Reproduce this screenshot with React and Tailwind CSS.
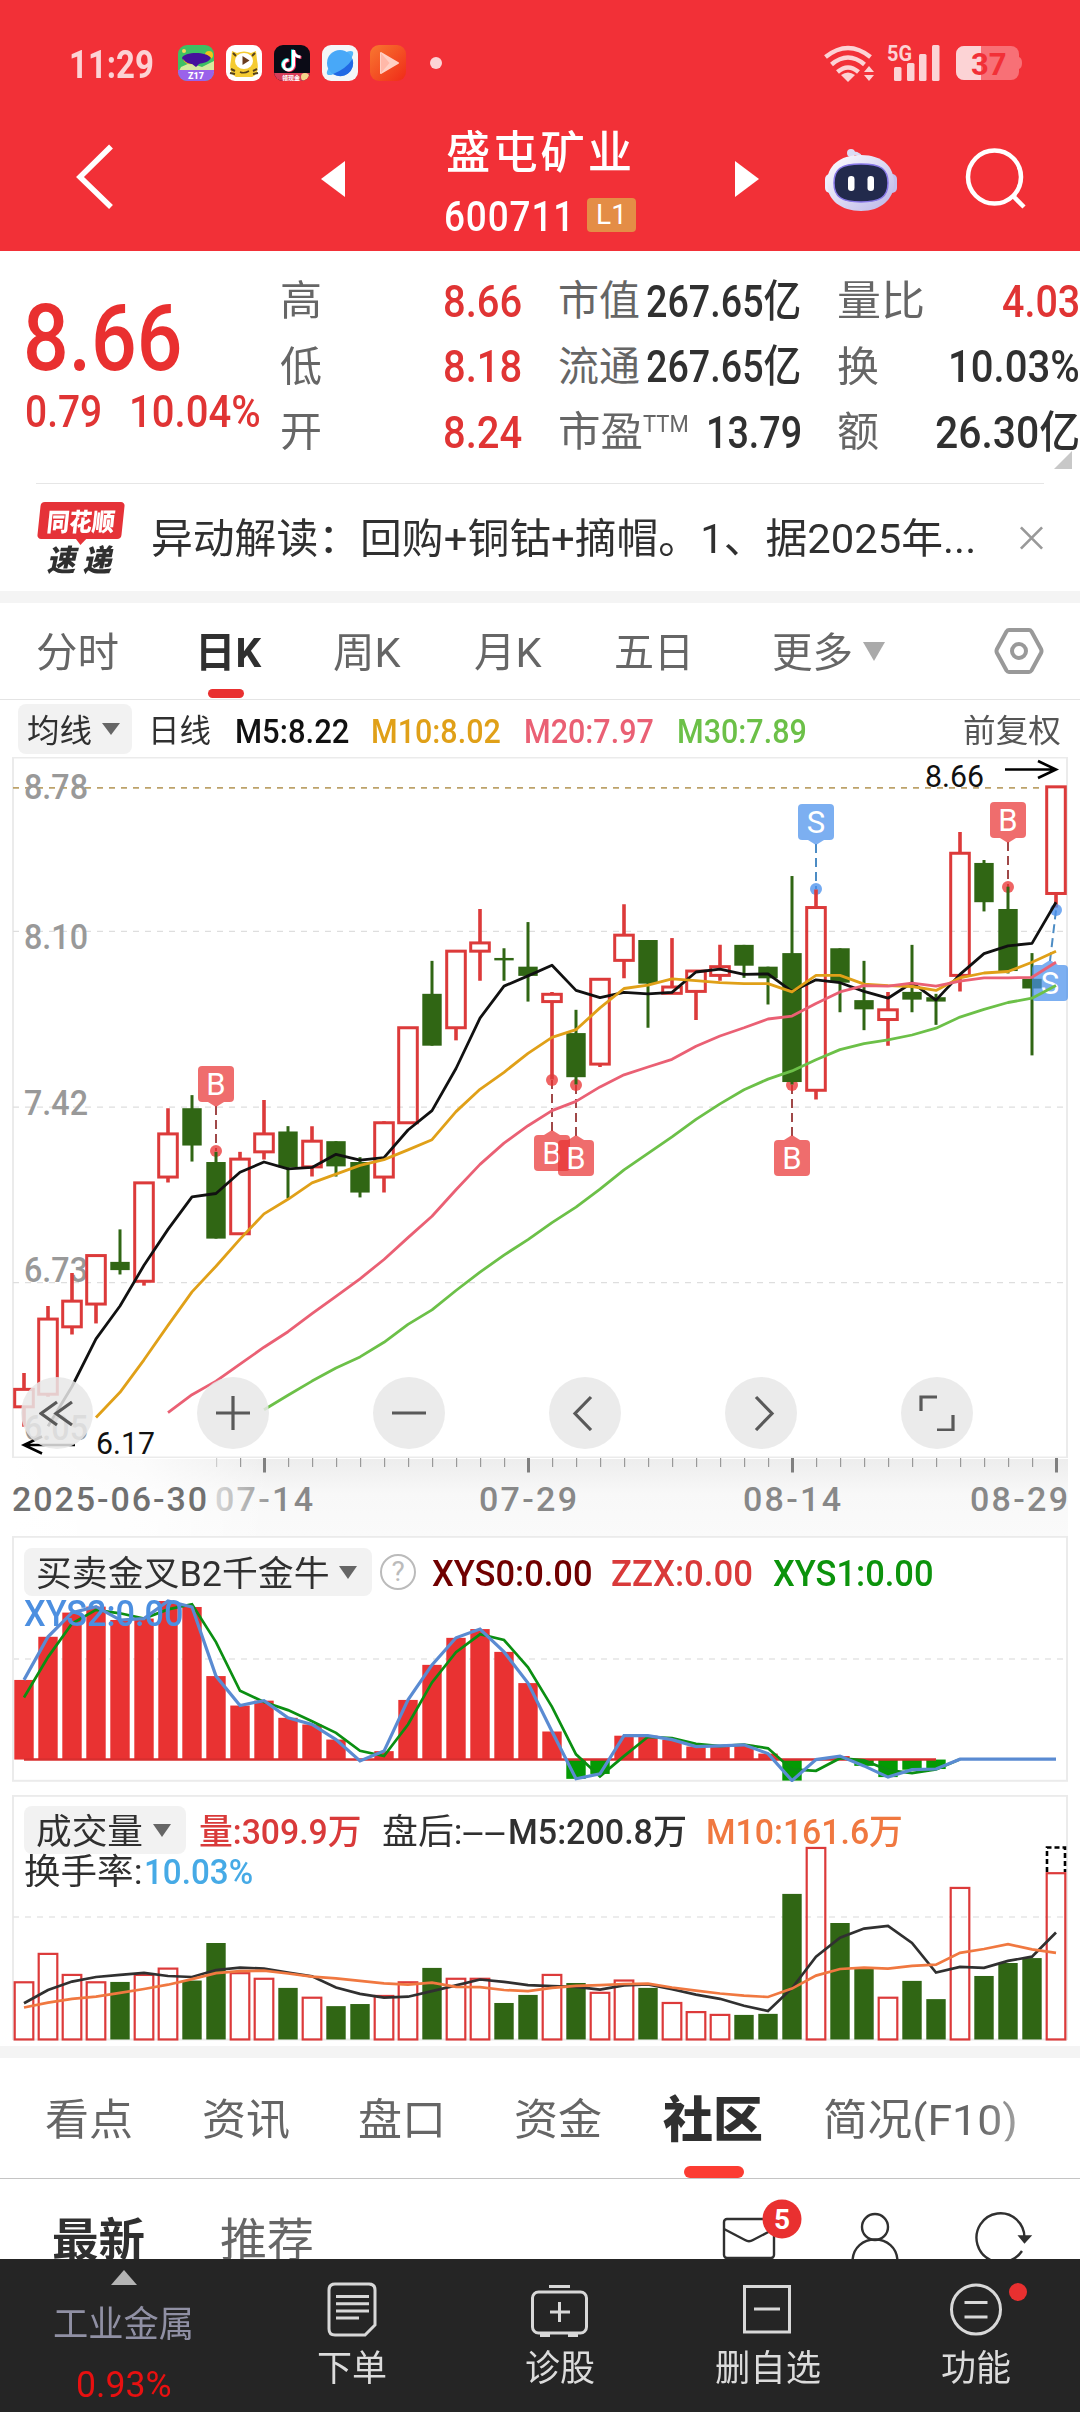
import React, { useLayoutEffect, useRef } from "react";

/* Single line of text, condensed or widened to fill the width of its box. */
function Fit({ className = "", children }) {
  const box = useRef(null);
  const txt = useRef(null);
  useLayoutEffect(() => {
    const s = box.current.clientWidth / txt.current.offsetWidth;
    txt.current.style.transform = `scaleX(${s})`;
  });
  return (
    <div ref={box} className={"shrink-0 translate-y-[1.5px] whitespace-nowrap leading-none " + className}>
      <span ref={txt} className="inline-block origin-left">{children}</span>
    </div>
  );
}

const X = (i) => 24 + i * 24;
const K = (v) => 750 + v / 2.063;
const S = (v) => 1500 + v / 2.851;
const path = (arr, start, f) =>
  arr.map((v, i) => `${i ? "L" : "M"}${X(i + start)} ${f(v).toFixed(1)}`).join("");

const RED = "#dc3a3a";
const GREEN = "#306614";

/* [rising, body top, body bottom, high, low] */
const candles = [
  [1, 1319, 1355, 1285, 1396], [1, 1174, 1329, 1147, 1334], [1, 1137, 1190, 1079, 1206],
  [1, 1043, 1143, 1043, 1183], [0, 1056, 1073, 989, 1082], [1, 893, 1096, 893, 1105],
  [1, 792, 881, 739, 892], [0, 739, 816, 712, 849], [0, 850, 1008, 829, 1008],
  [1, 844, 998, 829, 998], [1, 792, 829, 722, 845], [0, 787, 861, 776, 925],
  [1, 807, 860, 776, 880], [0, 807, 859, 807, 880], [0, 850, 913, 840, 923],
  [1, 769, 881, 766, 913], [1, 573, 769, 573, 769], [0, 503, 610, 435, 610],
  [1, 415, 573, 415, 599], [1, 398, 415, 328, 476], [0, 429, 434, 409, 476],
  [0, 447, 466, 355, 519], [1, 504, 519, 499, 680], [0, 584, 675, 536, 690],
  [1, 473, 648, 473, 654], [1, 382, 434, 318, 471], [0, 392, 482, 392, 573],
  [1, 489, 502, 388, 502], [1, 456, 498, 456, 557], [1, 447, 465, 402, 476],
  [0, 402, 445, 402, 470], [0, 447, 471, 447, 525], [0, 419, 685, 260, 690],
  [1, 325, 702, 288, 721], [0, 409, 480, 409, 541], [0, 516, 535, 435, 578],
  [1, 536, 556, 499, 610], [0, 499, 515, 402, 541], [0, 510, 519, 503, 567],
  [1, 213, 465, 169, 498], [0, 233, 314, 227, 333], [0, 328, 456, 282, 461],
  [0, 472, 492, 419, 630], [1, 76, 296, 76, 325],
];
const ma5 = [1395, 1313, 1215, 1147, 1063, 989, 922, 915, 871, 850, 864, 861, 834, 846, 841, 784, 744, 657, 553, 487, 466, 444, 496, 511, 500, 503, 500, 458, 452, 463, 462, 498, 474, 480, 498, 512, 480, 516, 463, 420, 404, 399, 314];
const ma10 = [1377, 1325, 1258, 1187, 1118, 1065, 1009, 957, 927, 893, 875, 857, 845, 825, 804, 746, 700, 665, 626, 593, 577, 532, 492, 485, 472, 476, 480, 482, 482, 499, 465, 465, 483, 486, 488, 496, 470, 460, 457, 438, 415];
const ma20 = [1367, 1330, 1302, 1267, 1232, 1200, 1163, 1127, 1091, 1051, 1006, 962, 907, 855, 811, 775, 744, 725, 695, 670, 654, 638, 611, 590, 573, 555, 549, 523, 499, 486, 487, 481, 487, 477, 470, 470, 469, 438];
const ma30 = [1361, 1331, 1302, 1275, 1252, 1222, 1185, 1155, 1115, 1077, 1042, 1010, 975, 943, 906, 866, 832, 798, 762, 730, 701, 679, 662, 639, 618, 606, 598, 588, 574, 551, 535, 521, 512, 486];

const fast = [513, 390, 321, 304, 342, 338, 288, 305, 502, 586, 572, 621, 640, 683, 744, 716, 570, 470, 393, 368, 433, 522, 660, 795, 781, 672, 672, 683, 703, 701, 698, 723, 800, 740, 730, 758, 790, 769, 767, 739, 739, 739, 739, 739];
const slow = [563, 448, 352, 313, 323, 338, 312, 297, 405, 544, 576, 599, 631, 664, 715, 730, 640, 520, 434, 383, 399, 477, 590, 725, 788, 730, 675, 679, 695, 702, 697, 708, 768, 772, 736, 742, 770, 779, 768, 739];

const volumes = [1375, 1294, 1354, 1375, 1374, 1354, 1336, 1370, 1263, 1349, 1365, 1391, 1419, 1443, 1437, 1414, 1375, 1334, 1365, 1365, 1434, 1411, 1354, 1377, 1405, 1370, 1391, 1434, 1460, 1468, 1468, 1465, 1123, 992, 1206, 1337, 1419, 1371, 1423, 1106, 1357, 1320, 1306, 1064];
const vol5 = [1435, 1397, 1373, 1360, 1354, 1348, 1357, 1360, 1340, 1333, 1336, 1347, 1358, 1390, 1408, 1419, 1416, 1400, 1384, 1367, 1374, 1383, 1386, 1388, 1396, 1384, 1381, 1395, 1410, 1422, 1442, 1457, 1392, 1302, 1248, 1222, 1214, 1263, 1347, 1331, 1334, 1314, 1302, 1233];
const vol10 = [1447, 1433, 1422, 1416, 1405, 1394, 1382, 1366, 1349, 1343, 1342, 1350, 1359, 1364, 1371, 1378, 1382, 1376, 1388, 1389, 1397, 1400, 1391, 1385, 1383, 1380, 1379, 1390, 1399, 1407, 1413, 1417, 1393, 1356, 1337, 1333, 1336, 1328, 1325, 1291, 1280, 1266, 1281, 1291];

function Marker({ kind, x, y, dx = x, dot }) {
  const buy = kind === "B";
  const c = buy ? "#e93030" : "#468eec";
  const dir = dot > y ? 1 : -1;
  return (
    <g>
      <path d={`M${x} ${y + dir * 22}L${dx} ${dot}`} stroke={buy ? "#a04848" : "#4c8cc4"} strokeWidth="2" strokeDasharray="9 5" fill="none" />
      <circle cx={dx} cy={dot} r="6" fill={c} opacity=".75" />
      <g opacity=".7">
        <rect x={x - 18} y={y - 18} width="36" height="36" rx="4" fill={c} />
        <path d={`M${x - 8} ${y + dir * 18}h16l-8 ${dir * 5}z`} fill={c} />
      </g>
      <text x={x} y={y + 11} textAnchor="middle" fontSize="31" fill="#fff">{kind}</text>
    </g>
  );
}

function Market() {
  const yLabels = [["8.78", 799], ["8.10", 949], ["7.42", 1115], ["6.73", 1281.5], ["6.05", 1440]];
  return (
    <svg className="block" width="1080" height="701" viewBox="0 757 1080 701" fill="none">
      <rect x="13" y="757.5" width="1054" height="700" stroke="#ebebeb" strokeWidth="2" />
      <g stroke="#dedede" strokeWidth="1.3" strokeDasharray="6 6">
        <path d="M13 931.3H1066M13 1107.2H1066M13 1282.7H1066" />
      </g>
      <path d="M13 787.8H1045" stroke="#bda26a" strokeWidth="1.8" strokeDasharray="6 6" />
      <g fontSize="35" fontWeight="500" fill="#999">
        {yLabels.map(([t, y]) => <text key={t} x="24" y={y} textLength="64" lengthAdjust="spacingAndGlyphs">{t}</text>)}
      </g>
      <Marker kind="B" x={216} y={1084} dot={1151} />
      <Marker kind="B" x={552} y={1153} dot={1080} />
      <Marker kind="B" x={576} y={1158} dot={1085} />
      <Marker kind="B" x={792} y={1158} dot={1085} />
      <Marker kind="S" x={816} y={822} dot={889} />
      <Marker kind="B" x={1008} y={820} dot={887} />
      {candles.map(([up, a, b, h, l], i) => up ? (
        <g key={i} stroke={RED} strokeWidth="3">
          <path strokeWidth="3.600" d={`M${X(i)} ${K(h)}V${K(a)}M${X(i)} ${K(b)}V${K(l)}`} />
          <rect x={X(i) - 9.3} y={K(a)} width="18.6" height={K(b) - K(a)} />
        </g>
      ) : (
        <g key={i} fill={GREEN}>
          <rect x={X(i) - 1.5} y={K(h)} width="3" height={K(l) - K(h)} />
          <rect x={X(i) - 9.7} y={K(a)} width="19.4" height={K(b) - K(a)} />
        </g>
      ))}
      <Marker kind="S" x={1050} y={983} dx={1056} dot={910} />
      <g strokeWidth="2.8" strokeLinejoin="round">
        <path d={path(ma5, 1, K)} stroke="#111" />
        <path d={path(ma10, 3, K)} stroke="#e0a018" />
        <path d={path(ma20, 6, K)} stroke="#ea6074" />
        <path d={path(ma30, 10, K)} stroke="#6cc048" />
      </g>
      <g stroke="#000" strokeWidth="2.6">
        <path d="M1005 769.5H1056M1038 761L1056 769.5L1038 778" />
        <path d="M75 1445H24M42 1436.500L24 1445L42 1453.500" />
      </g>
      <g fontSize="31" fill="#111">
        <text x="925" y="787" textLength="59" lengthAdjust="spacingAndGlyphs">8.66</text>
        <text x="96" y="1454" textLength="59" lengthAdjust="spacingAndGlyphs">6.17</text>
      </g>
    </svg>
  );
}

function Axis() {
  const ticks = Array.from({ length: 36 }, (_, i) => i + 8);
  const major = [10, 21, 32, 43];
  return (
    <svg className="block" width="1080" height="78" viewBox="0 1458 1080 78">
      <defs>
        <linearGradient id="strip" x1="0" y1="0" x2="0" y2="1">
          <stop offset="0" stopColor="#ededed" /><stop offset=".45" stopColor="#f8f8f8" /><stop offset="1" stopColor="#fafafa" />
        </linearGradient>
        <linearGradient id="fadeIn" x1="0" y1="0" x2="1" y2="0">
          <stop offset="0" stopColor="#d8d8d8" /><stop offset=".7" stopColor="#888" />
        </linearGradient>
        <linearGradient id="leftFade" x1="0" y1="0" x2="1" y2="0">
          <stop offset="0" stopColor="#fff" /><stop offset=".5" stopColor="#fff" stopOpacity=".8" /><stop offset="1" stopColor="#fff" stopOpacity="0" />
        </linearGradient>
      </defs>
      <rect x="12" y="1459" width="1056" height="77" fill="url(#strip)" />
      <rect x="12" y="1459" width="260" height="77" fill="url(#leftFade)" />
      {ticks.map((i) => major.includes(i)
        ? <rect key={i} x={X(i) - 1} y="1458" width="3" height="14.500" fill="#808080" />
        : <rect key={i} x={X(i)} y="1458" width="1.2" height="9" fill={i === 8 ? "#ccc" : "#999"} />)}
      <g fontSize="34" fontWeight="500" fill="#888">
        <text x="12" y="1511" textLength="195" lengthAdjust="spacing" fill="#707070">2025-06-30</text>
        <text x="215" y="1511" textLength="98" lengthAdjust="spacing" fill="url(#fadeIn)">07-14</text>
        <text x="479" y="1511" textLength="98" lengthAdjust="spacing">07-29</text>
        <text x="743" y="1511" textLength="98" lengthAdjust="spacing">08-14</text>
        <text x="970" y="1511" textLength="98" lengthAdjust="spacing">08-29</text>
      </g>
    </svg>
  );
}

function Indicator() {
  return (
    <svg className="block" width="1080" height="246" viewBox="0 1536 1080 246" fill="none">
      <rect x="13" y="1536.800" width="1054" height="244" stroke="#ebebeb" strokeWidth="2" />
      <path d="M13 1658.900H1066" stroke="#ebebeb" strokeWidth="2" strokeDasharray="6 6" />
      {fast.map((v, i) => v < 736
        ? <rect key={i} x={X(i) - 9.700} y={S(v)} width="19.400" height={S(740) - S(v)} fill="#e93232" />
        : v > 745 && <rect key={i} x={X(i) - 9.700} y={S(740)} width="19.400" height={S(v) - S(740)} fill="#049a04" />)}
      <path d="M24 1759.500H936" stroke="#d82f2f" strokeWidth="2.500" />
      <path d={path(slow, 0, S)} stroke="#0b8f12" strokeWidth="2.700" />
      <path d={path(fast, 0, S)} stroke="#5a8bd2" strokeWidth="3.200" />
    </svg>
  );
}

function Volume() {
  return (
    <svg className="block" width="1080" height="251" viewBox="0 1795 1080 251" fill="none">
      <path d="M13 2040V1795.500H1067V2040" stroke="#ebebeb" strokeWidth="2" />
      <path d="M13 2039.500H1067M13 1795.800H1067" stroke="#ebebeb" strokeWidth="2" />
      <path d="M13 1917H1066" stroke="#e6e6e6" strokeWidth="1.600" strokeDasharray="6 6" />
      {volumes.map((v, i) => candles[i][0]
        ? <rect key={i} x={X(i) - 9.300} y={S(v)} width="18.600" height={S(1538) - S(v)} stroke={RED} strokeWidth="2.200" />
        : <rect key={i} x={X(i) - 9.700} y={S(v)} width="19.400" height={S(1538) - S(v)} fill={GREEN} />)}
      <path d="M1047 1872V1847.500H1065V1872" stroke="#000" strokeWidth="2.600" strokeDasharray="5 3" />
      <path d={path(vol5, 0, S)} stroke="#303030" strokeWidth="2.700" />
      <path d={path(vol10, 0, S)} stroke="#f07840" strokeWidth="2.700" />
    </svg>
  );
}

const Down = ({ className = "" }) => (
  <svg className={"shrink-0 " + className} viewBox="0 0 18 12" preserveAspectRatio="none"><path d="M0 0h18l-9 12z" fill="currentColor" /></svg>
);

const Round = ({ children }) => (
  <div className="flex size-[72px] items-center justify-center rounded-full bg-[#e8e8e8]/85">
    <svg width="36" height="36" viewBox="0 0 36 36" fill="none" stroke="#595959" strokeWidth="3.200">{children}</svg>
  </div>
);

function StatusBar() {
  return (
    <div className="flex h-[125px] items-center text-[#fcd3d5]">
      <Fit className="ml-[69px] w-[85px] -translate-y-px text-[38px] font-bold">11:29</Fit>
      <div className="ml-6 flex gap-3">
        <svg width="36" height="36" viewBox="0 0 36 36">
          <clipPath id="app"><rect width="36" height="36" rx="9" /></clipPath>
          <g clipPath="url(#app)">
            <rect width="36" height="36" fill="#3fbf63" /><path d="M3 22l9-4 12 4 12-6v12H0z" fill="#d8e8a0" />
            <circle cx="31" cy="10" r="4" fill="#f2c21c" /><circle cx="6" cy="6" r="2" fill="#f6d65c" />
            <path d="M4 13c2-6 24-7 29 0-2 4-8 5-12 6l-3 3-4-3c-5 0-8-2-10-6z" fill="#46109c" /><path d="M5 14c3 4 6 5 10 5-5 1-9-1-10-5z" fill="#f2c21c" />
            <rect y="25" width="36" height="12" fill="#9a62ea" /><text x="18" y="34" textAnchor="middle" fontSize="9" fontWeight="900" fill="#fff">Z17</text>
          </g>
        </svg>
        <svg width="36" height="36" viewBox="0 0 36 36">
          <rect width="36" height="36" rx="9" fill="#fff" />
          <path d="M6 6l5 2q7-3 14 0l5-2 1 9q3 14-5 17H10Q2 29 5 15z" fill="#f5cb32" />
          <path d="M5 24l4 2M4 28l5 1M31 24l-4 2M32 28l-5 1M7 8l3 3M29 8l-3 3" stroke="#54401c" strokeWidth="2" />
          <ellipse cx="18" cy="16" rx="9" ry="8" fill="#fff" /><path d="M16.500 11l7 4.500-7 4.500z" fill="#6a3c20" /><path d="M14 27q4 2 9-1" stroke="#54401c" strokeWidth="1.500" fill="none" />
        </svg>
        <svg width="36" height="36" viewBox="0 0 36 36">
          <g clipPath="url(#app)">
            <rect width="36" height="36" fill="#0b0b16" />
            <g fill="none" strokeWidth="3"><path d="M18.500 4.500v15a5 5 0 1 1-5-5M18.500 6q1 5 7 5.500" stroke="#25e8e4" /><path d="M20.500 5.500v15a5 5 0 1 1-5-5M20.500 7q1 5 7 5.500" stroke="#f42a56" /><path d="M19.500 5v15a5 5 0 1 1-5-5M19.500 6.500q1 5 7 5.500" stroke="#fff" /></g>
            <rect y="28" width="36" height="9" fill="#d83c58" /><text x="8" y="34.500" fontSize="6" fontWeight="700" fill="#fff">领现金</text><circle cx="31" cy="32" r="4" fill="#f6d68a" />
          </g>
        </svg>
        <svg width="36" height="36" viewBox="0 0 36 36">
          <rect width="36" height="36" rx="9" fill="#f4f6f8" />
          <ellipse cx="18" cy="18" rx="17" ry="5.500" transform="rotate(-42 18 18)" fill="#55b5fa" />
          <circle cx="18" cy="18" r="13" fill="#48a8f8" /><path d="M30.500 14A13 13 0 0 1 11 29Q24 24 30.500 14z" fill="#2168e4" />
        </svg>
        <svg width="36" height="36" viewBox="0 0 36 36">
          <defs><linearGradient id="or" x1="0" y1="0" x2="1" y2="1"><stop stopColor="#f87830" /><stop offset="1" stopColor="#f02a18" /></linearGradient></defs>
          <rect width="36" height="36" rx="9" fill="url(#or)" /><path d="M11 8l17 10-17 10z" fill="#ffd0c4" stroke="#ffd0c4" strokeWidth="2" strokeLinejoin="round" /><path d="M11 8l8.500 10L11 28z" fill="#ffb8a8" />
        </svg>
      </div>
      <div className="ml-6 size-3 rounded-full bg-[#fcd3d5]" />
      <svg className="ml-[381px]" width="52" height="38" viewBox="823 43 52 38" fill="none" stroke="#fcd3d5">
        <g strokeWidth="4.500"><path d="M825.500 56q22.500-18 45 0M831.500 63.500q16.500-14 33 0M837.500 71q10.500-9 21 0" /></g>
        <path d="M841 74q7-5 14 0l-7 7z" fill="#fcd3d5" stroke="none" /><path d="M864 71l5-6 5 6zM864 74l5 6 5-6z" fill="#fcd3d5" stroke="none" />
      </svg>
      <svg className="ml-[13px] overflow-visible" width="54" height="38" viewBox="888 43 54 38" fill="#fcd3d5">
        <text x="887" y="60" fontSize="22" fontWeight="700" textLength="25" lengthAdjust="spacingAndGlyphs">5G</text>
        <rect x="894" y="66" width="7.500" height="14" rx="1.500" /><rect x="907" y="62" width="7.500" height="18" rx="1.500" /><rect x="919" y="53" width="7.500" height="27" rx="1.500" /><rect x="932" y="44" width="7.500" height="36" rx="1.500" />
      </svg>
      <svg className="ml-[14px]" width="67" height="36" viewBox="956 45 67 36">
        <clipPath id="bat"><rect x="956" y="46" width="63" height="34" rx="8" /></clipPath>
        <g clipPath="url(#bat)"><rect x="956" y="46" width="63" height="34" fill="#f87076" /><rect x="956" y="46" width="25" height="34" fill="#fcd3d5" /></g>
        <path d="M1019 57q3 1 3 6t-3 6z" fill="#f87076" />
        <text x="971" y="74.500" fontSize="31" fontWeight="700" fill="#f23037">37</text>
      </svg>
    </div>
  );
}

function Header() {
  return (
    <header className="h-[251px] bg-[#f23037] text-white">
      <StatusBar />
      <div className="flex h-[126px] items-start">
        <svg className="ml-[74px] mt-[18px]" width="42" height="68" viewBox="74 143 42 68" fill="none" stroke="#fff" strokeWidth="5.500"><path d="M111 146.500L80 177l31 30" /></svg>
        <svg className="ml-[205px] mt-9" width="24" height="36" viewBox="0 0 24 36" fill="#fff"><path d="M24 0v36L0 18z" /></svg>
        <div className="ml-[99px] w-[192px]">
          <Fit className="ml-[2px] mt-[4px] w-[189px] text-[45px] font-medium tracking-[3px]">盛屯矿业</Fit>
          <div className="mt-[23px] flex h-9 items-center">
            <Fit className="w-[131px] text-[42px] font-medium tracking-[1px]">600711</Fit>
            <div className="ml-[12px] flex h-[34px] w-[49px] shrink-0 items-center justify-center rounded-[4px] bg-[#e48d46] text-[28px] leading-none">L1</div>
          </div>
        </div>
        <svg className="ml-[99px] mt-9" width="24" height="36" viewBox="0 0 24 36" fill="#fff"><path d="M0 0v36l24-18z" /></svg>
        <svg className="ml-[64px] mt-[18px]" width="76" height="76" viewBox="823 141 76 76">
          <defs><linearGradient id="head" x1="0" y1="0" x2="1" y2="1"><stop stopColor="#fff" /><stop offset="1" stopColor="#b9b4e8" /></linearGradient></defs>
          <path d="M851 151q10-1 11 9" fill="none" stroke="#dcdcf4" strokeWidth="3.500" /><circle cx="851" cy="151" r="4" fill="#dcdcf4" />
          <rect x="825" y="172" width="12" height="19" rx="5" fill="#eef" /><rect x="885" y="172" width="12" height="19" rx="5" fill="#c4c0ee" />
          <path d="M861 153c22 0 33 12 33 28s-13 28-33 28-34-11-34-28 12-28 34-28z" fill="url(#head)" />
          <path d="M861 162c20 0 27 5 27 19s-8 19-27 19-27-5-27-19 7-19 27-19z" fill="#222a4c" stroke="#8878e8" strokeWidth="1.500" />
          <rect x="848" y="174" width="6.500" height="15" rx="3.200" fill="#fff" /><rect x="867.500" y="174" width="6.500" height="15" rx="3.200" fill="#fff" />
        </svg>
        <svg className="ml-[65px] mt-[22px]" width="64" height="64" viewBox="964 147 64 64" fill="none" stroke="#fff" strokeWidth="4.500"><circle cx="994.500" cy="177" r="26.500" /><path d="M1013 196l11 11" /></svg>
      </div>
    </header>
  );
}

function Quote() {
  const dark = "font-medium text-[#303030] text-[44px]";
  const red = "font-medium text-[#e03434] text-[44px]";
  const lab = "text-[#666] text-[41px]";
  return (
    <section className="relative flex h-[232px] bg-white pt-[16px]">
      <div className="w-[280px] pt-[24px]">
        <Fit className="ml-[23px] w-[159px] text-[92px] font-medium text-[#e93030]">8.66</Fit>
        <div className="mt-[5px] flex">
          <Fit className={"ml-[25px] w-[77px] " + red}>0.79</Fit>
          <Fit className={"ml-[27px] w-[132px] " + red}>10.04%</Fit>
        </div>
      </div>
      <div className="w-[165px]">
        {["高", "低", "开"].map((t) => <div key={t} className="flex h-[65.5px] items-center"><Fit className={"w-[42px] " + lab}>{t}</Fit></div>)}
      </div>
      <div className="w-[113px]">
        {["8.66", "8.18", "8.24"].map((t) => <div key={t} className="flex h-[65.500px] items-center"><Fit className={"-ml-[2px] w-[79px] " + red}>{t}</Fit></div>)}
      </div>
      <div className="w-[279px]">
        {["市值", "流通"].map((t) => (
          <div key={t} className="flex h-[65.500px] items-center">
            <Fit className={"w-[82px] " + lab}>{t}</Fit><Fit className={"ml-[6px] w-[155px] " + dark}>267.65亿</Fit>
          </div>
        ))}
        <div className="flex h-[65.500px] items-center">
          <Fit className={"w-[85px] " + lab}>市盈</Fit>
          <Fit className="-mt-[17px] w-[46px] text-[24px] text-[#666]">TTM</Fit>
          <Fit className={"ml-[17px] w-[96px] " + dark}>13.79</Fit>
        </div>
      </div>
      <div className="flex-1">
        <div className="flex h-[65.500px] items-center justify-between"><Fit className={"w-[88px] " + lab}>量比</Fit><Fit className={"w-[78px] " + red}>4.03</Fit></div>
        <div className="flex h-[65.500px] items-center justify-between"><Fit className={"w-[42px] " + lab}>换</Fit><Fit className={"w-[132px] " + dark}>10.03%</Fit></div>
        <div className="flex h-[65.500px] items-center justify-between"><Fit className={"w-[42px] " + lab}>额</Fit><Fit className={"w-[145px] " + dark}>26.30亿</Fit></div>
      </div>
      <svg className="absolute bottom-[14px] right-2" width="18" height="18" viewBox="0 0 18 18"><path d="M18 0v18H0z" fill="#c8c8c8" /></svg>
    </section>
  );
}

function News() {
  return (
    <section className="mx-9 flex h-[108px] items-center border-t border-[#e6e6e6]">
      <div className="flex w-[90px] shrink-0 flex-col items-center">
        <div className="relative flex h-[37px] w-[84px] -skew-x-6 items-center justify-center rounded-[4px] bg-[#e53238]">
          <Fit className="w-[68px] translate-y-0 text-[25px] font-black text-white">同花顺</Fit>
          <svg className="absolute -bottom-[6px] left-[38px]" width="12" height="7"><path d="M0 0h12l-6 7z" fill="#e53238" /></svg>
        </div>
        <Fit className="mt-[5px] w-[64px] -skew-x-12 text-[30px] font-black text-[#303030]">速 递</Fit>
      </div>
      <Fit className="ml-[25px] w-[825px] text-[41px] text-[#303030]">异动解读：回购+铜钴+摘帽。1、据2025年...</Fit>
      <svg className="ml-[43px]" width="26" height="26" viewBox="0 0 26 26" stroke="#999" strokeWidth="2.800"><path d="M2 2l22 22M24 2L2 24" /></svg>
    </section>
  );
}

function PeriodTabs() {
  const t = "text-[41px] text-[#666]";
  return (
    <nav className="flex h-[97px] items-center border-b border-[#e4e4e4]">
      <Fit className={"ml-9 w-[83px] " + t}>分时</Fit>
      <div className="relative ml-[76px]">
        <Fit className="w-[66px] text-[41px] font-bold text-[#303030]">日K</Fit>
        <div className="absolute left-[13px] top-[58px] h-[9px] w-9 rounded-full bg-[#e93030]" />
      </div>
      <Fit className={"ml-[72px] w-[68px] " + t}>周K</Fit>
      <Fit className={"ml-[73px] w-[68px] " + t}>月K</Fit>
      <Fit className={"ml-[72px] w-[80px] " + t}>五日</Fit>
      <Fit className={"ml-[78px] w-[81px] " + t}>更多</Fit>
      <Down className="ml-[10px] h-[19px] w-[22px] text-[#aaa]" />
      <svg className="ml-[109px]" width="50" height="48" viewBox="0 0 50 48" fill="none" stroke="#999" strokeWidth="4"><path d="M15 3h20q1.500 0 2.500 1.500L47 22q1 2 0 4L37.500 43.500q-1 1.500-2.500 1.500H15q-1.500 0-2.500-1.500L3 26q-1-2 0-4l9.500-17.500Q13.500 3 15 3z" /><circle cx="25" cy="24" r="7" /></svg>
    </nav>
  );
}

function MaRow() {
  const n = "text-[34px] font-medium";
  return (
    <div className="flex h-[57px] items-center">
      <div className="ml-[18px] flex h-[50px] w-[114px] items-center rounded-lg bg-[#f2f2f2]">
        <Fit className="ml-[9px] w-[65px] text-[32px] text-[#303030]">均线</Fit>
        <Down className="ml-[10px] h-[12px] w-[18px] text-[#666]" />
      </div>
      <Fit className="ml-[16px] w-[63px] text-[32px] text-[#303030]">日线</Fit>
      <Fit className={"ml-[24px] w-[114px] text-[#111] " + n}>M5:8.22</Fit>
      <Fit className={"ml-[22px] w-[130px] text-[#e0a018] " + n}>M10:8.02</Fit>
      <Fit className={"ml-[23px] w-[130px] text-[#ea6074] " + n}>M20:7.97</Fit>
      <Fit className={"ml-[23px] w-[130px] text-[#6cc048] " + n}>M30:7.89</Fit>
      <Fit className="ml-[156px] w-[98px] text-[32px] text-[#555]">前复权</Fit>
    </div>
  );
}

function MainChart() {
  return (
    <section className="relative">
      <Market />
      <div className="absolute bottom-[9px] left-[21px] flex gap-[104px]">
        <Round><path d="M18 7L2 18.500L18 30M33 7L17 18.500L33 30" /></Round>
        <Round><path d="M18 1v34M1 18h34" /></Round>
        <Round><path d="M1 18h34" /></Round>
        <Round><path d="M24 2L8 18.500L24 35" /></Round>
        <Round><path d="M13 2L29 18.500L13 35" /></Round>
        <Round><path d="M2 16V2h16M34 20v15H18" /></Round>
      </div>
    </section>
  );
}

function IndicatorPanel() {
  const n = "text-[36px] font-medium";
  return (
    <section className="relative">
      <Indicator />
      <div className="absolute inset-x-0 top-[12px]">
        <div className="flex h-12 items-center">
          <div className="ml-6 flex h-12 w-[348px] items-center rounded-lg bg-[#f2f2f2]">
            <Fit className="ml-[12px] w-[293px] text-[35px] text-[#303030]">买卖金叉B2千金牛</Fit>
            <Down className="ml-[10px] h-[13px] w-[18px] text-[#666]" />
          </div>
          <div className="ml-2 flex size-9 items-center justify-center rounded-full border-[2.500px] border-[#bbb] text-[28px] leading-none text-[#bbb]">?</div>
          <Fit className={"ml-[16px] w-[161px] text-[#700000] " + n}>XYS0:0.00</Fit>
          <Fit className={"ml-[18px] w-[142px] text-[#d93a3a] " + n}>ZZX:0.00</Fit>
          <Fit className={"ml-[20px] w-[161px] text-[#0c930c] " + n}>XYS1:0.00</Fit>
        </div>
        <Fit className={"-mt-[2px] ml-6 w-[160px] text-[#4c8fe0] " + n}>XYS2:0.00</Fit>
      </div>
    </section>
  );
}

function VolumePanel() {
  const n = "text-[35px]";
  return (
    <section className="relative mt-[13px]">
      <Volume />
      <div className="absolute inset-x-0 top-[11px]">
        <div className="flex h-12 items-center">
          <div className="ml-6 flex h-12 w-[162px] items-center rounded-lg bg-[#f2f2f2]">
            <Fit className="ml-[12px] w-[107px] text-[35px] text-[#303030]">成交量</Fit>
            <Down className="ml-[10px] h-[13px] w-[18px] text-[#666]" />
          </div>
          <Fit className={"ml-[13px] w-[163px] font-medium text-[#d93a3a] " + n}>量:309.9万</Fit>
          <div className="ml-[20px] flex text-[#303030]">
            <Fit className={"w-[80px] " + n}>盘后:</Fit>
            <Fit className={"w-[43px] " + n}>--</Fit>
            <Fit className={"ml-[3px] w-[179px] font-medium " + n}>M5:200.8万</Fit>
          </div>
          <Fit className={"ml-[19px] w-[197px] font-medium text-[#f07840] " + n}>M10:161.6万</Fit>
        </div>
        <div className="-mt-px flex">
          <Fit className={"ml-6 w-[118px] text-[#303030] " + n}>换手率:</Fit>
          <Fit className={"ml-[2px] w-[109px] font-medium text-[#46aae6] " + n}>10.03%</Fit>
        </div>
      </div>
    </section>
  );
}

function SectionTabs() {
  const t = "text-[43px] text-[#666]";
  return (
    <nav className="flex h-[121px] items-center border-b border-[#c4c4c4] pt-px">
      <Fit className={"ml-[45px] w-[88px] " + t}>看点</Fit>
      <Fit className={"ml-[69px] w-[88px] " + t}>资讯</Fit>
      <Fit className={"ml-[68px] w-[88px] " + t}>盘口</Fit>
      <Fit className={"ml-[68px] w-[88px] " + t}>资金</Fit>
      <div className="relative ml-[61px]">
        <Fit className="w-[100px] text-[49px] font-black text-[#303030]">社区</Fit>
        <div className="absolute left-[21px] top-[72px] h-[12px] w-[60px] rounded-full bg-[#fc3c32]" />
      </div>
      <Fit className="ml-[60px] w-[195px] text-[43px] text-[#666] [mask-image:linear-gradient(to_right,#000_80%,#0009)]">简况(F10)</Fit>
    </nav>
  );
}

function Community() {
  return (
    <section className="flex h-[80px] items-start overflow-hidden">
      <Fit className="ml-[52px] mt-[36px] w-[93px] text-[46px] font-bold text-[#303030]">最新</Fit>
      <Fit className="ml-[75px] mt-[36px] w-[94px] text-[46px] text-[#666]">推荐</Fit>
      <svg className="ml-[406px]" width="330" height="81" viewBox="720 2179 330 81" fill="none" stroke="#303030" strokeWidth="2.400">
        <rect x="724" y="2219" width="50" height="39" rx="3" /><path d="M724 2229l21 11q4 2.500 8 0l21-11" />
        <circle cx="782" cy="2219" r="19.500" fill="#e93030" stroke="none" />
        <text x="782" y="2229" textAnchor="middle" fontSize="28" fontWeight="700" fill="#fff" stroke="none">5</text>
        <circle cx="875" cy="2227" r="13" /><path d="M852.500 2262c0-30 45-30 45 0" />
        <path d="M1024.500 2238a24 24.500 0 1 0-14 22M1011 2260q7-3 11-9" /><path d="M1020 2236.500h9.500l-5 5.500z" fill="#303030" />
      </svg>
    </section>
  );
}

function BottomBar() {
  const label = "text-[36px] text-[#dcdcdc]";
  const icon = { fill: "none", stroke: "#d8d8d8", strokeWidth: 3 };
  return (
    <footer className="flex h-[153px] bg-[#252525]">
      <div className="flex w-[247px] flex-col items-center pt-[11px]">
        <svg width="26" height="15" viewBox="0 0 26 15"><path d="M13 0l13 15H0z" fill="#b4b4b4" /></svg>
        <Fit className="mt-[20px] w-[141px] text-[36px] text-[#9090a4]">工业金属</Fit>
        <Fit className="mt-[24px] w-[96px] text-[36px] text-[#e81010]">0.93%</Fit>
      </div>
      <div className="ml-px flex w-[208px] flex-col items-center pt-[22px]">
        <svg width="52" height="57" viewBox="326 2281 52 57" {...icon}><path d="M335 2284h34q6 0 6 6v35l-10 10h-30q-6 0-6-6v-39q0-6 6-6zM336 2296.500h33M336 2303.700h33M336 2311h33M336 2318h23" /></svg>
        <Fit className={"mt-[11px] w-[70px] " + label}>下单</Fit>
      </div>
      <div className="flex w-[208px] flex-col items-center pt-[22px]">
        <svg width="62" height="57" viewBox="529 2281 62 57" {...icon}><rect x="532.500" y="2292" width="54" height="41" rx="6" /><path d="M549 2286.500h21M559.500 2302v20M550 2312h20" /><path d="M540 2335h10M568 2335h10" strokeWidth="4" /></svg>
        <Fit className={"mt-[11px] w-[70px] " + label}>诊股</Fit>
      </div>
      <div className="flex w-[208px] flex-col items-center pt-[22px]">
        <svg width="52" height="57" viewBox="742 2281 52 57" {...icon}><rect x="744.500" y="2286.500" width="45" height="45.500" /><path d="M754 2309h26" /></svg>
        <Fit className={"mt-[11px] w-[106px] " + label}>删自选</Fit>
      </div>
      <div className="flex w-[208px] flex-col items-center pt-[22px]">
        <svg className="overflow-visible" width="52" height="57" viewBox="950 2281 52 57" {...icon}><circle cx="976" cy="2309.500" r="24.500" /><path d="M964.500 2302.500h23M964.500 2317h23" /><circle cx="1018" cy="2292" r="9" fill="#e93030" stroke="none" /></svg>
        <Fit className={"mt-[11px] w-[70px] " + label}>功能</Fit>
      </div>
    </footer>
  );
}

export default function App() {
  return (
    <main className="h-[2412px] w-[1080px] overflow-hidden bg-white font-[Roboto,'Noto_Sans_CJK_SC',sans-serif]">
      <Header />
      <Quote />
      <News />
      <div className="h-3 bg-[#f4f4f4]" />
      <PeriodTabs />
      <MaRow />
      <MainChart />
      <Axis />
      <IndicatorPanel />
      <VolumePanel />
      <div className="h-3 bg-[#f4f4f4]" />
      <SectionTabs />
      <Community />
      <BottomBar />
    </main>
  );
}
